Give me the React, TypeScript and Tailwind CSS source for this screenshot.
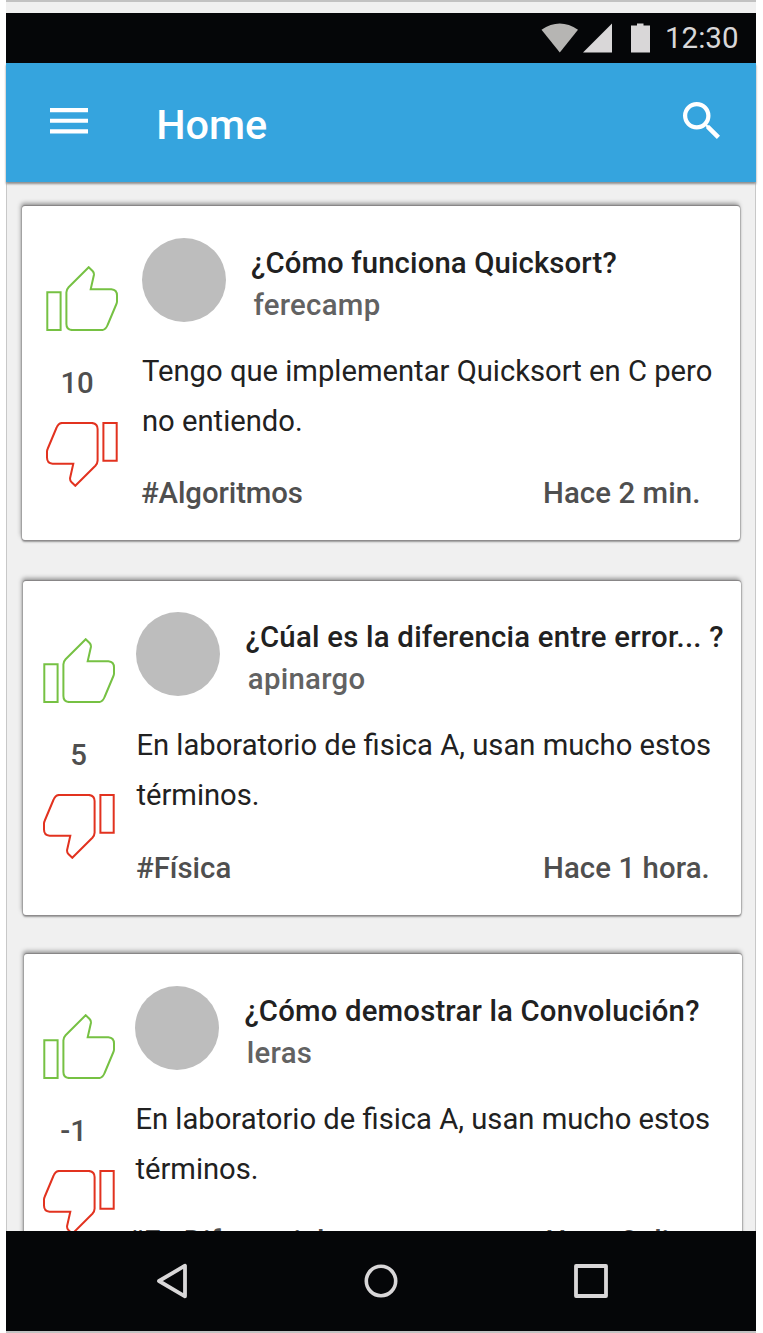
interface Post {
  title: string;
  user: string;
  body: string;
  tag: string;
  time: string;
  votes: string;
  card: string;
  voteCol: string;
  count: string;
  content: string;
  heading: string;
  footer: string;
  tagBox: string;
}

const posts: Post[] = [
  {
    title: "¿Cómo funciona Quicksort?",
    user: "ferecamp",
    body: "Tengo que implementar Quicksort en C pero no entiendo.",
    tag: "#Algoritmos",
    time: "Hace 2 min.",
    votes: "10",
    card: "ml-[15px] h-[334px]",
    voteCol: "pl-[24.4px] pt-[60px] w-[120px]",
    count: "pl-[14px]",
    content: "pt-8",
    heading: "tracking-[0.12px]",
    footer: "mt-[27px] -ml-px tracking-[-0.08px]",
    tagBox: "w-[402px]",
  },
  {
    title: "¿Cúal es la diferencia entre error... ?",
    user: "apinargo",
    body: "En laboratorio de fisica A, usan mucho estos términos.",
    tag: "#Física",
    time: "Hace 1 hora.",
    votes: "5",
    card: "ml-4 mt-[41px] h-[334px]",
    voteCol: "pl-[20.3px] pt-[57.4px] w-[113.4px]",
    count: "pl-[27px]",
    content: "pt-[31px]",
    heading: "tracking-[0.25px]",
    footer: "mt-7 -ml-[0.4px]",
    tagBox: "w-[407px]",
  },
  {
    title: "¿Cómo demostrar la Convolución?",
    user: "leras",
    body: "En laboratorio de fisica A, usan mucho estos términos.",
    tag: "#Ec.Diferenciales",
    time: "Hace 2 dias.",
    votes: "-1",
    card: "ml-[17px] mt-[39px] h-[334px]",
    voteCol: "pl-[19.3px] pt-[60px] w-[111.4px]",
    count: "pl-[17px]",
    content: "pt-8",
    heading: "tracking-[0.18px]",
    footer: "mt-[27px] -ml-[9px]",
    tagBox: "w-[419px]",
  },
];

function Thumb({ down = false }: { down?: boolean }) {
  return (
    <svg
      viewBox="0 0 72 65"
      className={down ? "block h-[65px] w-[72px] rotate-180 text-[#e2321f]" : "block h-[65px] w-[72px] text-[#76c143]"}
      fill="none"
      stroke="currentColor"
      strokeWidth="2"
    >
      <path d="M1.3 26.2H14.6V64.1H1.3Z" />
      <path d="M42.7 1.2L46.6 5Q48.2 6.7 47.9 9L44.7 23.3H65.4Q71 23.8 71 29.5V35.2Q71 36.7 70.4 38L61.6 59Q59.6 64.1 55.5 64.1H26.4Q20.4 63.7 20.4 57.9V26.4Q20.5 23.4 22.6 21.2Z" />
    </svg>
  );
}

function PostCard({ post }: { post: Post }) {
  return (
    <article
      className={`flex w-[718px] shrink-0 rounded-[3px] bg-white shadow-[0_-1px_1px_#858384,0_1px_1px_#8d8b8c,0_2px_2px_#999,1px_0_1px_#c4c4c4,-1px_0_1px_#adadad,-1px_-3px_4px_#9a9a9a] ${post.card}`}
    >
      <div className={`shrink-0 ${post.voteCol}`}>
        <Thumb />
        <div className={`mt-8 mb-[19px] h-10 leading-10 font-medium text-[#4f4f4f] ${post.count}`}>{post.votes}</div>
        <Thumb down />
      </div>
      <div className={`w-[595px] shrink-0 ${post.content}`}>
        <div className="flex h-[108px]">
          <div className="size-[84px] shrink-0 rounded-full bg-[#bdbdbd]" />
          <div className="pt-1 pl-[25px] font-medium leading-[42px] whitespace-nowrap">
            <h2 className={`text-[#212121] ${post.heading}`}>{post.title}</h2>
            <p className="pl-[2.4px] tracking-[0.3px] text-[#626262]">{post.user}</p>
          </div>
        </div>
        <p className="w-[585px] text-[29.2px] leading-[50px] text-[#212121]">{post.body}</p>
        <div className={`flex leading-10 font-medium whitespace-nowrap text-[#4f4f4f] ${post.footer}`}>
          <span className={`shrink-0 ${post.tagBox}`}>{post.tag}</span>
          <span className="tracking-[0.1px]">{post.time}</span>
        </div>
      </div>
    </article>
  );
}

export default function App() {
  return (
    <div className="h-[1333px] w-[763px] overflow-hidden bg-white pl-[6px] font-[Roboto,sans-serif] text-[29.33px]">
      <div className="flex h-[1333px] w-[750px] flex-col border-y-2 border-[#c2c2c2] bg-[#f0f0f0]">
        <header className="z-10 mt-[10.5px] flex h-[50px] shrink-0 items-center bg-[#050608] text-[#d9d7d8]">
          <svg viewBox="0 0 110 30" className="ml-[535px] h-[30px] w-[110px]" fill="currentColor">
            <path d="M.5 6.8Q18.7-5.6 37 6.8L18.8 29.5Z" fill="#b6b5b3" />
            <path d="M42 29.5L71 .5V29.5Z" />
            <path d="M90 2.5H96V.5H102.5V2.5H109V29.5H90Z" />
          </svg>
          <span className="pl-[14px] text-[29.5px] leading-[50px]">12:30</span>
        </header>
        <div className="z-10 flex h-[119px] shrink-0 items-center bg-[#35a4de] text-white shadow-[0_2px_2px_#8f8f8f]">
          <svg viewBox="3 6 18 12" className="mb-[2px] ml-11 h-[25.5px] w-[38px]" fill="currentColor">
            <path d="M3 18h18v-2H3v2zm0-5h18v-2H3v2zm0-7v2h18V6H3z" />
          </svg>
          <h1 className="w-[526px] pt-[5px] pl-[68.2px] text-[41.4px] leading-[50px] font-medium">Home</h1>
          <svg viewBox="3 3 17.49 17.49" className="mb-[3px] ml-[69px] size-[37px] shrink-0" fill="currentColor">
            <path d="M15.5 14h-.79l-.28-.27A6.471 6.471 0 0 0 16 9.5 6.5 6.5 0 1 0 9.5 16c1.61 0 3.09-.59 4.23-1.57l.27.28v.79l5 4.99L20.49 19l-4.99-5zm-6 0C7.01 14 5 11.99 5 9.5S7.01 5 9.5 5 14 7.01 14 9.5 11.99 14 9.5 14z" />
          </svg>
        </div>
        <main className="flex h-[1049.5px] shrink-0 flex-col overflow-hidden border-x border-[#c8c8c8] pt-[24.5px]">
          {posts.map((post) => (
            <PostCard key={post.title} post={post} />
          ))}
        </main>
        <nav className="flex h-[100px] shrink-0 items-center bg-[#050608] text-[#d9d7d8]">
          <svg viewBox="0 0 32 36" className="ml-[150px] h-9 w-8" fill="none" stroke="currentColor" strokeWidth="3.8" strokeLinejoin="round">
            <path d="M29 2.7V33.3L3 18Z" />
          </svg>
          <svg viewBox="0 0 34 34" className="ml-[175.5px] size-[34px]" fill="none" stroke="currentColor" strokeWidth="3.6">
            <circle cx="17" cy="17" r="14.7" />
          </svg>
          <svg viewBox="0 0 34 34" className="ml-[176.5px] size-[34px]" fill="none" stroke="currentColor" strokeWidth="3.8" strokeLinejoin="round">
            <path d="M2 2H32V32H2Z" />
          </svg>
        </nav>
      </div>
    </div>
  );
}
